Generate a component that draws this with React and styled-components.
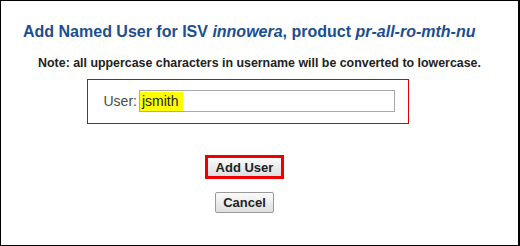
import React from "react";
import styled, { createGlobalStyle } from "styled-components";

const Global = createGlobalStyle`
  html, body { margin: 0; padding: 0; background: #fff; }
  body { font-family: "Liberation Sans", Arial, sans-serif; }
`;

const Frame = styled.div`
  box-sizing: border-box;
  width: 520px;
  height: 246px;
  border: 1px solid #000;
  border-right-width: 2px;
  display: flex;
  flex-direction: column;
  align-items: center;
`;

const Title = styled.h2`
  align-self: stretch;
  margin: 0;
  padding: 21px 0 0 22px;
  font-size: 16px;
  line-height: 19px;
  font-weight: bold;
  color: #1c4e92;
`;

const Note = styled.p`
  margin: 15px 0 0;
  font-size: 12.4px;
  line-height: 14px;
  font-weight: bold;
  color: #222;
  text-align: center;
`;

const FormBox = styled.div`
  box-sizing: border-box;
  width: 322px;
  height: 45px;
  margin: 9px 24px 0 0;
  border: 1px solid #e00000;
  padding: 0 0 1px 16px;
  display: flex;
  align-items: center;
  gap: 2px;
`;

const Label = styled.span`
  font-size: 14px;
  color: #4a4a4a;
`;

const Field = styled.div`
  box-sizing: border-box;
  width: 256px;
  height: 22px;
  border: 1px solid #a9a9a9;
  display: flex;
  align-items: center;
`;

const Mark = styled.span`
  display: inline-block;
  background: #ffff00;
  color: #222;
  font-size: 14px;
  line-height: 19px;
  padding: 0 4px 0 2px;
`;

const Button = styled.button`
  box-sizing: border-box;
  font-family: "Liberation Sans", Arial, sans-serif;
  font-size: 13px;
  font-weight: bold;
  color: #222;
  background: linear-gradient(#fbfbfb, #dedede);
  border: ${(p) => (p.$focused ? "3px solid #ee0000" : "1px solid #9a9a9a")};
  border-radius: ${(p) => (p.$focused ? "0" : "2px")};
  height: ${(p) => (p.$focused ? "24px" : "21px")};
  padding: ${(p) => (p.$focused ? "0 8px" : "0 7px")};
  margin: ${(p) => p.$mt} 30px 0 0;
  line-height: 1;
  cursor: pointer;
`;

export default function App() {
  return (
    <>
      <Global />
      <Frame>
        <Title>
          Add Named User for ISV <i>innowera</i>, product <i>pr-all-ro-mth-nu</i>
        </Title>
        <Note>Note: all uppercase characters in username will be converted to lowercase.</Note>
        <FormBox>
          <Label>User:</Label>
          <Field>
            <Mark>jsmith</Mark>
          </Field>
        </FormBox>
        <Button $focused $mt="31px">Add User</Button>
        <Button $mt="13px">Cancel</Button>
      </Frame>
    </>
  );
}
